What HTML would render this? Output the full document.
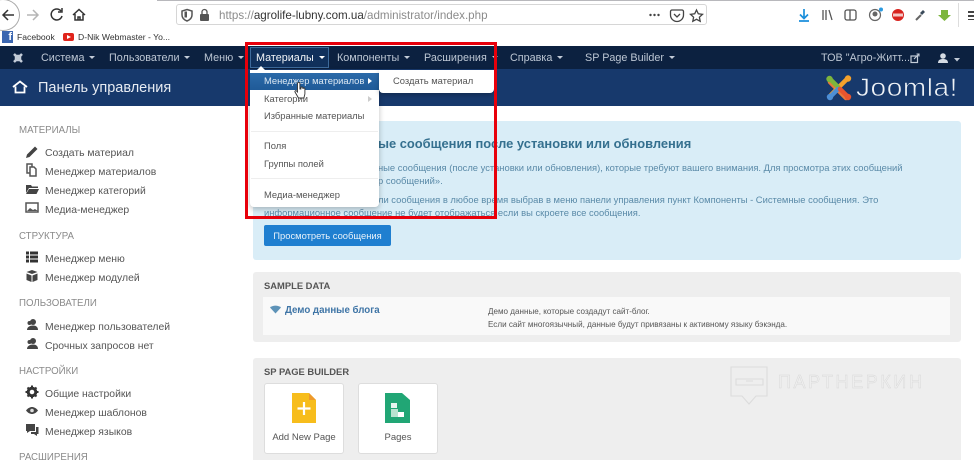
<!DOCTYPE html>
<html lang="ru"><head><meta charset="utf-8"><title>Панель управления</title>
<style>
html,body{margin:0;padding:0}
body{width:974px;height:460px;overflow:hidden;position:relative;background:#fff;font-family:"Liberation Sans",sans-serif;color:#444;filter:blur(.35px)}
.a{position:absolute;white-space:nowrap}
.n{font-size:10.8px;color:#bcc6d3;top:51px;line-height:14px}
.n i{display:inline-block;width:0;height:0;border:3px solid transparent;border-top:3.5px solid #c3ccd8;border-bottom:0;margin-left:5px;vertical-align:2px}
.h{font-size:9.7px;color:#8a8a8a;left:19px;line-height:12px}
.s{font-size:10.4px;color:#555;left:45px;line-height:13px}
.m{font-size:9.4px;color:#555;left:264px;line-height:12px}
.t{font-size:9.4px;color:#5a8aa8;line-height:12px}
.ic{position:absolute;left:25px;width:14px;height:14px;overflow:visible}
</style></head><body>
<div class="a" style="left:157px;top:0;width:817px;height:1px;background:#b8b8bc"></div>
<div class="a" style="left:-14px;top:-1px;width:34px;height:32px;border:1px solid #aaa;border-radius:50%;background:#fff;box-sizing:border-box"></div>
<svg class="a" style="left:0;top:0" width="100" height="30" fill="none" stroke-width="1.5"><path d="M14 15H3M8 10l-5 5 5 5" stroke="#333"/><path d="M37 15H27M33 10l5 5-5 5" stroke="#b5b5b5"/><path d="M61 11a5.500 5.500 0 1 0 1 5M62 8v4h-4" stroke="#333"/><path d="M73 15l6-5.500 6 5.500M75 14v6h8v-6M78 20v-3h2v3" stroke="#333"/></svg>
<div class="a" style="left:176px;top:4px;width:531px;height:21px;background:#fff;border:1px solid #d6d6d6;border-radius:3px;box-sizing:border-box"></div>
<svg class="a" style="left:181px;top:7px" width="30" height="16"><path d="M6 2.500l5 1.500v4c0 3-2.500 5-5 6-2.500-1-5-3-5-6V4z" fill="none" stroke="#555" stroke-width="1.500"/><rect x="3.500" y="4.500" width="2.500" height="6" fill="#555"/><rect x="19" y="7" width="9" height="7" rx="1" fill="#555"/><path d="M21 7V5a2.500 2.500 0 0 1 5 0v2" fill="none" stroke="#555" stroke-width="1.300"/></svg>
<div class="a" style="left:219px;top:9px;font-size:11.6px;line-height:13px;color:#8b8b8b">https://<span style="color:#333">agrolife-lubny.com.ua</span>/administrator/index.php</div>
<svg class="a" style="left:648px;top:5px" width="320" height="22" fill="none"><circle cx="2.500" cy="10" r="1.200" fill="#444"/><circle cx="6.500" cy="10" r="1.200" fill="#444"/><circle cx="10.500" cy="10" r="1.200" fill="#444"/><path d="M24 5h10a1.500 1.500 0 0 1 1.500 1.500V10a6.500 6.500 0 0 1-13 0V6.500A1.500 1.500 0 0 1 24 5z" stroke="#444" stroke-width="1.300"/><path d="M26 9l3 3 3-3" stroke="#444" stroke-width="1.300"/><path d="M48.500 5l1.800 3.800 4.200.5-3.100 2.900.8 4.100-3.700-2-3.700 2 .8-4.100-3.100-2.900 4.200-.5z" stroke="#444" stroke-width="1.300"/><path d="M156 4v9M152 9.500l4 4 4-4M151 16h10" stroke="#1b8fdb" stroke-width="1.700"/><path d="M175 5v10M178 5v10M181 5l3 10" stroke="#555" stroke-width="1.300"/><rect x="197" y="5" width="11" height="10" rx="2" stroke="#555" stroke-width="1.300"/><path d="M202 5v10" stroke="#555" stroke-width="1.300"/><circle cx="227" cy="10" r="5.500" stroke="#666" stroke-width="1.200"/><circle cx="227" cy="9" r="2.500" fill="#666"/><circle cx="233" cy="4.500" r="2" fill="#2b9ae0"/><circle cx="250" cy="10" r="6" fill="#d8231f"/><rect x="245" y="8.500" width="10" height="3" fill="#f3c8c6"/><path d="M268 15l5-5" stroke="#666" stroke-width="2"/><path d="M272 8l3-3 2 2-3 3z" fill="#3a4a5a"/><path d="M293 5h7v5h3l-6.500 6-6.500-6h3z" fill="#7cb63c"/></svg>
<div class="a" style="left:958px;top:3px;width:1px;height:24px;background:#ddd"></div>
<div class="a" style="left:968px;top:11px;width:6px;height:9px;background:repeating-linear-gradient(#444 0 2px,#fff 2px 4px)"></div>

<div class="a" style="left:2px;top:31px;width:11px;height:12px;background:#3b66b0;color:#fff;font:bold 11px/13px 'Liberation Sans',sans-serif;text-align:right;padding-right:1px;box-sizing:border-box">f</div>
<div class="a" style="left:17px;top:31px;font-size:8.6px;line-height:13px;color:#333">Facebook</div>
<div class="a" style="left:63px;top:33px;width:11px;height:8px;background:#e0241c;border-radius:2px"></div>
<div class="a" style="left:67px;top:35px;width:0;height:0;border-left:4px solid #fff;border-top:2px solid transparent;border-bottom:2px solid transparent"></div>
<div class="a" style="left:78px;top:31px;font-size:8.6px;line-height:13px;color:#333">D-Nik Webmaster - Yo...</div>

<div class="a" style="left:0;top:46px;width:974px;height:23px;background:#0c2140"></div>
<div class="a" style="left:0;top:69px;width:974px;height:37px;background:#17396c"></div>
<svg class="a" style="left:11px;top:51px" width="14" height="14" fill="none" stroke="#c3ccd8" stroke-width="2.500"><path d="M3 3l8 8M11 3l-8 8"/><rect x="4.500" y="4.500" width="5" height="5" stroke-width="1.500"/></svg>
<div class="a n" style="left:41px">Система<i></i></div>
<div class="a n" style="left:109px">Пользователи<i></i></div>
<div class="a n" style="left:204px">Меню<i></i></div>
<div class="a" style="left:250px;top:47px;width:79px;height:21px;background:#10305b;border:1px solid #3d6a9b;box-sizing:border-box"></div>
<div class="a n" style="left:256px;color:#f2f5f8">Материалы<i style="border-top-color:#fff"></i></div>
<div class="a n" style="left:337px">Компоненты<i></i></div>
<div class="a n" style="left:424px">Расширения<i></i></div>
<div class="a n" style="left:510px">Справка<i></i></div>
<div class="a n" style="left:585px">SP Page Builder<i></i></div>
<div class="a n" style="left:821px">ТОВ "Агро-Житт...</div>
<svg class="a" style="left:910px;top:53px" width="60" height="12" fill="none"><rect x="1" y="3" width="6.500" height="6.500" stroke="#c3ccd8" stroke-width="1.200"/><path d="M4 6l5-5M6.500 1H9v2.500" stroke="#c3ccd8" stroke-width="1.100"/><circle cx="33" cy="3" r="2.800" fill="#d5dbe3"/><path d="M28 10c0-3 2-4 5-4s5 1 5 4z" fill="#d5dbe3"/><path d="M44 5h6l-3 3.500z" fill="#c3ccd8"/></svg>

<svg class="a" style="left:12px;top:80px" width="16" height="14" fill="none" stroke="#fff" stroke-width="1.800"><path d="M1 7l7-5.500L15 7M3.500 6.500V12.500h9V6.500"/></svg>
<div class="a" style="left:38px;top:80px;font-size:14.500px;line-height:17px;color:#e6ebf2">Панель управления</div>

<svg class="a" style="left:825px;top:74px" width="28" height="28" fill="none" stroke-width="4.500" stroke-linecap="round"><path d="M5 8l9 9 7 7" stroke="#e8793a"/><path d="M22 5l-9 9-7 7" stroke="#f4a12c"/><path d="M5 5l8 8" stroke="#7db53d"/><path d="M6 22l7-7" stroke="#4d8fd6"/><path d="M22 22l-7-7" stroke="#e8552e"/><circle cx="4.500" cy="5" r="3.200" fill="#7db53d" stroke="none"/><circle cx="23" cy="4.500" r="3.200" fill="#f4a12c" stroke="none"/><circle cx="5" cy="23" r="3.200" fill="#4d8fd6" stroke="none"/><circle cx="23" cy="23" r="3.200" fill="#e8552e" stroke="none"/></svg>
<div class="a" style="left:856px;top:73px;font-size:25px;line-height:30px;color:#eef2f6;-webkit-text-stroke:.6px #17396c;letter-spacing:.5px;transform:scaleX(1.12);transform-origin:left">Joomla!</div>

<div class="a h" style="top:125px">МАТЕРИАЛЫ</div>
<div class="a s" style="top:147px">Создать материал</div>
<div class="a s" style="top:166px">Менеджер материалов</div>
<div class="a s" style="top:185px">Менеджер категорий</div>
<div class="a s" style="top:204px">Медиа-менеджер</div>
<div class="a h" style="top:231px">СТРУКТУРА</div>
<div class="a s" style="top:253px">Менеджер меню</div>
<div class="a s" style="top:272px">Менеджер модулей</div>
<div class="a h" style="top:298px">ПОЛЬЗОВАТЕЛИ</div>
<div class="a s" style="top:321px">Менеджер пользователей</div>
<div class="a s" style="top:340px">Срочных запросов нет</div>
<div class="a h" style="top:366px">НАСТРОЙКИ</div>
<div class="a s" style="top:388px">Общие настройки</div>
<div class="a s" style="top:407px">Менеджер шаблонов</div>
<div class="a s" style="top:426px">Менеджер языков</div>
<div class="a h" style="top:452px">РАСШИРЕНИЯ</div>

<svg class="ic" style="top:145px" viewBox="0 0 14 14"><path d="M1 13l1-3.500L10 1.500l2.500 2.500-8 8z" fill="#444"/></svg>
<svg class="ic" style="top:163px" viewBox="0 0 14 14" fill="none" stroke="#555" stroke-width="1.500"><path d="M2 1h5v9H2z"/><path d="M5 4h4l2 2v7H5z" fill="#fff"/></svg>
<svg class="ic" style="top:182px" viewBox="0 0 14 14"><path d="M1 3h5l1 1.500h6V6H4L1 11z" fill="#444"/><path d="M4 7h10l-2.500 5H1z" fill="#444"/></svg>
<svg class="ic" style="top:201px" viewBox="0 0 14 14" fill="none"><rect x="1" y="2" width="12" height="9" stroke="#555" stroke-width="1.500"/><path d="M2 10l3-3 3 2 2-1 3 2z" fill="#555"/></svg>
<svg class="ic" style="top:250px" viewBox="0 0 14 14" fill="#333"><path d="M1 1.500h3v3H1zM5 1.500h8v3H5zM1 5.500h3v3H1zM5 5.500h8v3H5zM1 9.500h3v3H1zM5 9.500h8v3H5z"/></svg>
<svg class="ic" style="top:269px" viewBox="0 0 14 14" fill="#444"><path d="M7 1l5.500 2L7 5 1.500 3zM1.500 4.500l5 2V13l-5-2zM12.500 4.500l-5 2V13l5-2z"/></svg>
<svg class="ic" style="top:318px" viewBox="0 0 14 14" fill="#444"><circle cx="8" cy="4" r="3"/><path d="M2 12c0-3 3-4.500 6-4.500s5 1.500 5 4.500z"/><circle cx="4.500" cy="5" r="2"/></svg>
<svg class="ic" style="top:337px" viewBox="0 0 14 14" fill="#444"><circle cx="8" cy="4" r="3"/><path d="M2 12c0-3 3-4.500 6-4.500s5 1.500 5 4.500z"/><circle cx="4.500" cy="5" r="2"/></svg>
<svg class="ic" style="top:385px" viewBox="0 0 14 14"><circle cx="7" cy="7" r="3.800" fill="none" stroke="#333" stroke-width="3"/><path d="M7 .5v13M.5 7h13M2.500 2.500l9 9M11.500 2.500l-9 9" stroke="#333" stroke-width="2" stroke-dasharray="2.500 8 2.500"/></svg>
<svg class="ic" style="top:404px" viewBox="0 0 14 14"><path d="M1 6.500C3 4 5 3 7 3s4 1 6 3.500C11 9 9 10 7 10S3 9 1 6.500z" fill="#444"/><circle cx="7" cy="6.500" r="1.800" fill="#ddd"/></svg>
<svg class="ic" style="top:423px" viewBox="0 0 14 14" fill="#444"><path d="M1 1h9v7H5l-3 2V8H1z"/><path d="M11 4h2.500v7H12v2l-3-2H6V9h5z"/></svg>

<div class="a" style="left:253px;top:121px;width:708px;height:139px;background:#d9edf7;border-radius:3px"></div>
<div class="a" style="left:378px;top:136px;font-size:12.9px;font-weight:bold;line-height:16px;color:#35708f">ые сообщения после установки или обновления</div>
<div class="a t" style="left:378px;top:162px">ные сообщения (после установки или обновления), которые требуют вашего внимания. Для просмотра этих сообщений</div>
<div class="a t" style="left:378px;top:175px">р сообщений».</div>
<div class="a t" style="left:378px;top:194px">ли сообщения в любое время выбрав в меню панели управления пункт Компоненты - Системные сообщения. Это</div>
<div class="a t" style="left:264px;top:207px">информационное сообщение не будет отображаться если вы скроете все сообщения.</div>
<div class="a" style="left:264px;top:225px;width:127px;height:21px;background:#1f7fd0;border-radius:2px;color:#e8f2fa;font-size:9.4px;line-height:22px;text-align:center">Просмотреть сообщения</div>

<div class="a" style="left:253px;top:272px;width:708px;height:70px;background:#eee;border-radius:3px"></div>
<div class="a" style="left:264px;top:279px;font-size:9.4px;font-weight:bold;line-height:13px;color:#555">SAMPLE DATA</div>
<div class="a" style="left:263px;top:297px;width:687px;height:38px;background:#f9f9f9"></div>
<svg class="a" style="left:270px;top:305px" width="11" height="9"><path d="M0 2.500C3 0 8 0 11 2.500L5.500 8.500z" fill="#5e93b8"/></svg>
<div class="a" style="left:285px;top:304px;font-size:9.7px;font-weight:bold;line-height:13px;color:#3f75a6">Демо данные блога</div>
<div class="a" style="left:488px;top:306px;font-size:8.1px;line-height:11px;color:#555">Демо данные, которые создадут сайт-блог.</div>
<div class="a" style="left:488px;top:319px;font-size:8.1px;line-height:11px;color:#555">Если сайт многоязычный, данные будут привязаны к активному языку бэкэнда.</div>

<div class="a" style="left:253px;top:358px;width:708px;height:102px;background:#eee;border-radius:3px 3px 0 0"></div>
<div class="a" style="left:264px;top:365px;font-size:9.4px;font-weight:bold;line-height:13px;color:#555">SP PAGE BUILDER</div>
<div class="a" style="left:264px;top:383px;width:80px;height:71px;background:#fff;border:1px solid #ddd;border-radius:3px;box-sizing:border-box"></div>
<div class="a" style="left:358px;top:383px;width:80px;height:71px;background:#fff;border:1px solid #ddd;border-radius:3px;box-sizing:border-box"></div>
<svg class="a" style="left:291px;top:393px" width="26" height="31"><path d="M1 0h17l7 7v23H1z" fill="#f7bd1c"/><path d="M18 0l7 7h-7z" fill="#ee9a2b"/><path d="M13 9v13M6.500 15.500h13" stroke="#fff" stroke-width="2.200"/></svg>
<svg class="a" style="left:385px;top:393px" width="26" height="31"><path d="M0 0h17l8 7v23H0z" fill="#21a675"/><rect x="6" y="10" width="6" height="5" fill="#e6f5ee"/><path d="M6 16h7v3h5v5H6z" fill="#b8e3d0"/><rect x="13" y="19" width="6" height="5" fill="#fff"/></svg>
<div class="a" style="left:264px;top:431px;width:80px;text-align:center;font-size:9.5px;line-height:13px;color:#555">Add New Page</div>
<div class="a" style="left:358px;top:431px;width:80px;text-align:center;font-size:9.5px;line-height:13px;color:#555">Pages</div>

<svg class="a" style="left:729px;top:366px" width="42" height="44" fill="none" stroke="#dcdcdc" stroke-width="1.100"><path d="M2 1h36v29H27l-7 8-7-8H2z"/><path d="M7 13h27v6H7zM17 15h7"/></svg>
<div class="a" style="left:778px;top:372px;font-size:18px;line-height:21px;color:#eee;-webkit-text-stroke:.4px #d6d6d6;letter-spacing:2.6px">ПАРТНЕРКИН</div>

<div class="a" style="left:250px;top:70px;width:129px;height:137px;background:#fff;border-radius:0 0 4px 4px;box-shadow:0 2px 6px rgba(0,0,0,.25)"></div>
<div class="a" style="left:250px;top:73px;width:129px;height:17px;background:linear-gradient(#2b6aa8,#1f5a97)"></div>
<div class="a" style="left:256px;top:66px;width:0;height:0;border:5px solid transparent;border-top:0;border-bottom:5px solid #fff"></div>
<div class="a m" style="top:75px;color:#dce8f3">Менеджер материалов</div>
<div class="a" style="left:368px;top:78px;width:0;height:0;border-left:4px solid #fff;border-top:3.500px solid transparent;border-bottom:3.500px solid transparent"></div>
<div class="a m" style="top:93px">Категории</div>
<div class="a" style="left:368px;top:96px;width:0;height:0;border-left:4px solid #ccc;border-top:3.500px solid transparent;border-bottom:3.500px solid transparent"></div>
<div class="a m" style="top:110px">Избранные материалы</div>
<div class="a" style="left:251px;top:131px;width:127px;height:1px;background:#eee"></div>
<div class="a m" style="top:140px">Поля</div>
<div class="a m" style="top:158px">Группы полей</div>
<div class="a" style="left:251px;top:178px;width:127px;height:1px;background:#eee"></div>
<div class="a m" style="top:189px">Медиа-менеджер</div>
<div class="a" style="left:379px;top:70px;width:115px;height:23px;background:#fff;border-radius:0 0 4px 4px;box-shadow:0 2px 5px rgba(0,0,0,.25)"></div>
<div class="a m" style="left:393px;top:75px">Создать материал</div>
<svg class="a" style="left:294px;top:82px" width="13" height="18"><path d="M3.500 1.500a1.200 1.200 0 0 1 2.400 0V7h1V6a1 1 0 0 1 2 0v1a1 1 0 0 1 2 0v5l-1 4H4.500L1 10c-.5-1 .8-1.800 1.500-1l1 1z" fill="#fff" stroke="#333" stroke-width=".9"/></svg>

<div class="a" style="left:245px;top:42px;width:252px;height:177px;border:3px solid #e8000b;box-sizing:border-box"></div>
</body></html>
